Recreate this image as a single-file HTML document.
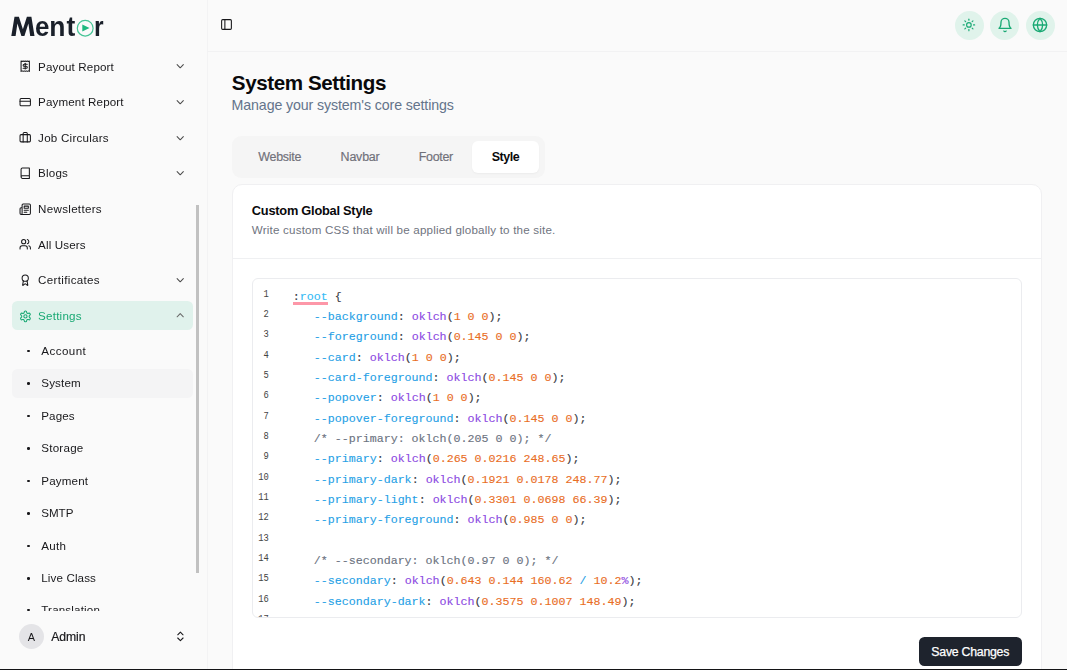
<!DOCTYPE html>
<html lang="en">
<head>
<meta charset="utf-8">
<title>System Settings</title>
<style>
*{box-sizing:border-box;margin:0;padding:0}
html,body{width:1067px;height:670px;overflow:hidden}
body{font-family:"Liberation Sans",sans-serif;background:#fafafa;color:#18181b;position:relative}
svg{display:block}
.abs{position:absolute}
#sidebar{will-change:transform;position:absolute;left:0;top:0;width:207.5px;height:669px;background:#fafafa;border-right:1px solid #f3f3f4}
#logo{position:absolute;left:0;top:0}
.item{position:absolute;left:12.1px;width:181.3px;height:29.2px;border-radius:5.5px;font-size:11.6px;color:#18181b}
.item .ic{position:absolute;left:7.1px;top:8.3px;width:12.44px;height:12.44px}
.item .tx{position:absolute;left:26px;top:-0.3px;line-height:29.2px;white-space:nowrap}
.item .ch{position:absolute;left:162.1px;top:8.3px;width:12.44px;height:12.44px;color:#4a4a4a}
.item.act .ch{color:#6a6a6a}
.item.act{background:#e0f2ec;color:#19a974}
.sub{position:absolute;left:12.1px;width:181.3px;height:28.9px;border-radius:5.5px;font-size:11.6px;color:#18181b}
.sub .dot{position:absolute;left:14.9px;top:13.2px;width:2.6px;height:2.6px;border-radius:50%;background:#18181b}
.sub .tx{position:absolute;left:29.2px;top:0.3px;line-height:28.9px;white-space:nowrap}
.sub.sel{background:#f4f4f5}
#menu{position:absolute;left:0;top:51px;width:207px;height:560.2px;overflow:hidden}
#sbar{position:absolute;left:195.8px;top:205.4px;width:3.3px;height:367.3px;background:#c1c1c1}
#avatar{position:absolute;left:18.9px;top:624px;width:25px;height:25px;border-radius:50%;background:#e4e4e7;font-size:10.9px;line-height:27.4px;text-align:center;color:#18181b}
#uname{position:absolute;left:51.2px;top:627.5px;-webkit-text-stroke:0.2px #18181b;font-size:12.2px;line-height:18px;color:#18181b;white-space:nowrap}
#updown{position:absolute;left:173.7px;top:630.1px;width:12.8px;height:12.8px;color:#18181b}
#header{position:absolute;left:207px;top:0;width:860px;height:51.8px;border-bottom:1px solid #f2f2f3}
.cbtn{position:absolute;top:10.8px;width:29.2px;height:29.2px;border-radius:50%;background:#e0f3eb;color:#19a974}
.cbtn svg{position:absolute}
h1{position:absolute;left:231.8px;top:71px;font-size:20.6px;line-height:24px;font-weight:bold;color:#09090b;white-space:nowrap}
#subt{position:absolute;left:231.6px;top:96.3px;font-size:14.2px;line-height:18px;color:#64748b;white-space:nowrap}
#tabs{position:absolute;left:232.2px;top:135.7px;width:312.4px;height:42px;border-radius:9px;background:#f5f5f5}
.tab{position:absolute;top:5.3px;height:32px;line-height:32px;font-size:12.44px;color:#71717a;-webkit-text-stroke:0.18px #71717a;text-align:center;border-radius:6px;white-space:nowrap}
.tab.on{background:#fff;color:#09090b;font-weight:bold;-webkit-text-stroke:0;box-shadow:0 1px 2px rgba(0,0,0,0.04)}
#card{position:absolute;left:232.2px;top:184px;width:810px;height:500px;background:#fff;border:1px solid #f0f0f2;border-radius:10px}
#ctitle{position:absolute;left:251.8px;top:203.1px;font-size:12.8px;line-height:16px;font-weight:bold;color:#09090b;white-space:nowrap}
#cdesc{position:absolute;left:251.8px;top:223.4px;font-size:11.6px;line-height:14px;color:#6f7480;white-space:nowrap}
#cdiv{position:absolute;left:233px;top:257.9px;width:808px;height:1px;background:#eff0f2}
#editor{position:absolute;left:252px;top:278px;width:770px;height:340px;border:1px solid #ebecef;border-radius:6px;background:#fff;overflow:hidden}
.ln{position:absolute;left:0;width:15.9px;text-align:right;font-family:"Liberation Mono",monospace;font-size:11px;transform:scaleX(0.8);transform-origin:100% 50%;line-height:20.33px;color:#444;height:20.33px}
.cl{position:absolute;left:39.7px;font-family:"Liberation Mono",monospace;font-size:11.67px;line-height:20.33px;height:20.33px;white-space:pre;color:#383a42;-webkit-text-stroke:0.12px currentColor}
.p{color:#1f9fe6}.r{color:#36bbf5}.f{color:#8b48e2}.n{color:#e96d24}.c{color:#6b7280}
#sq{position:absolute;left:39.6px;top:23px;width:35.3px;height:2.7px;background:#fd97a8}
#save{position:absolute;left:918.6px;top:636.6px;width:103.3px;height:29.2px;border-radius:5.5px;background:#1e232d;color:#fff;font-size:12.3px;line-height:30.6px;-webkit-text-stroke:0.25px #fff;text-align:center;white-space:nowrap}
#bottom{position:absolute;left:0;top:669px;width:1067px;height:1px;background:#141416}
</style>
</head>
<body>
<div id="sidebar">
<svg id="logo" width="120" height="50" viewBox="0 0 120 50">
<path d="M11.3 36.1 L14.5 16.8 L18.9 16.8 L22.9 29.3 L26.9 16.8 L31.4 16.8 L34.5 36.1 L30.2 36.1 L28.4 23.6 L24.4 36.1 L21.4 36.1 L17.4 23.6 L15.6 36.1 Z" fill="#1a202a"/>
<g font-family="Liberation Sans, sans-serif" font-weight="bold" font-size="27" fill="#1a202a">
<text x="34.9" y="36.1" textLength="14.4" lengthAdjust="spacingAndGlyphs">e</text>
<text x="49.2" y="36.1" textLength="16.2" lengthAdjust="spacingAndGlyphs">n</text>
<text x="66.5" y="36.1" textLength="8.8" lengthAdjust="spacingAndGlyphs">t</text>
<text x="94" y="36.1" textLength="9.6" lengthAdjust="spacingAndGlyphs">r</text>
</g>
<circle cx="85.2" cy="28.2" r="7.9" fill="none" stroke="#45c496" stroke-width="1.2"/>
<path d="M82.3 24.6 L89.5 28.1 L82.3 31.6 Z" fill="#1db87e"/>
</svg>

<div id="menu">
<div class="item" style="top:1.10px"><svg class="ic"  viewBox="0 0 24 24" fill="none" stroke="currentColor" stroke-width="2" stroke-linecap="round" stroke-linejoin="round"><path d="M4 2v20l2-1 2 1 2-1 2 1 2-1 2 1 2-1 2 1V2l-2 1-2-1-2 1-2-1-2 1-2-1-2 1Z"/><path d="M16 8h-6a2 2 0 1 0 0 4h4a2 2 0 1 1 0 4H8"/><path d="M12 17.5v-11"/></svg><span class="tx"><span id="x_i0" style="letter-spacing:0.129px">Payout Report</span></span><svg class="ch"  viewBox="0 0 24 24" fill="none" stroke="currentColor" stroke-width="2" stroke-linecap="round" stroke-linejoin="round"><path d="m6 9 6 6 6-6"/></svg></div>
<div class="item" style="top:36.66px"><svg class="ic"  viewBox="0 0 24 24" fill="none" stroke="currentColor" stroke-width="2" stroke-linecap="round" stroke-linejoin="round"><rect width="20" height="14" x="2" y="5" rx="2"/><line x1="2" x2="22" y1="10" y2="10"/></svg><span class="tx"><span id="x_i1" style="letter-spacing:0.130px">Payment Report</span></span><svg class="ch"  viewBox="0 0 24 24" fill="none" stroke="currentColor" stroke-width="2" stroke-linecap="round" stroke-linejoin="round"><path d="m6 9 6 6 6-6"/></svg></div>
<div class="item" style="top:72.22px"><svg class="ic" style="margin-top:-0.5px" viewBox="0 0 24 24" fill="none" stroke="currentColor" stroke-width="2" stroke-linecap="round" stroke-linejoin="round"><rect width="20" height="14" x="2" y="7" rx="2" ry="2"/><path d="M16 21V5a2 2 0 0 0-2-2h-4a2 2 0 0 0-2 2v16"/></svg><span class="tx"><span id="x_i2" style="letter-spacing:0.242px">Job Circulars</span></span><svg class="ch"  viewBox="0 0 24 24" fill="none" stroke="currentColor" stroke-width="2" stroke-linecap="round" stroke-linejoin="round"><path d="m6 9 6 6 6-6"/></svg></div>
<div class="item" style="top:107.78px"><svg class="ic"  viewBox="0 0 24 24" fill="none" stroke="currentColor" stroke-width="2" stroke-linecap="round" stroke-linejoin="round"><path d="M4 19.5v-15A2.5 2.5 0 0 1 6.5 2H20v20H6.5a2.5 2.5 0 0 1 0-5H20"/></svg><span class="tx"><span id="x_i3" style="letter-spacing:0.197px">Blogs</span></span><svg class="ch"  viewBox="0 0 24 24" fill="none" stroke="currentColor" stroke-width="2" stroke-linecap="round" stroke-linejoin="round"><path d="m6 9 6 6 6-6"/></svg></div>
<div class="item" style="top:143.34px"><svg class="ic"  viewBox="0 0 24 24" fill="none" stroke="currentColor" stroke-width="2" stroke-linecap="round" stroke-linejoin="round"><path d="M4 22h16a2 2 0 0 0 2-2V4a2 2 0 0 0-2-2H8a2 2 0 0 0-2 2v16a2 2 0 0 1-2 2Zm0 0a2 2 0 0 1-2-2v-9c0-1.1.9-2 2-2h2"/><path d="M18 14h-8"/><path d="M15 18h-5"/><path d="M10 6h8v4h-8V6Z"/></svg><span class="tx"><span id="x_i4" style="letter-spacing:0.294px">Newsletters</span></span></div>
<div class="item" style="top:178.90px"><svg class="ic"  viewBox="0 0 24 24" fill="none" stroke="currentColor" stroke-width="2" stroke-linecap="round" stroke-linejoin="round"><path d="M16 21v-2a4 4 0 0 0-4-4H6a4 4 0 0 0-4 4v2"/><circle cx="9" cy="7" r="4"/><path d="M22 21v-2a4 4 0 0 0-3-3.87"/><path d="M16 3.13a4 4 0 0 1 0 7.75"/></svg><span class="tx"><span id="x_i5" style="letter-spacing:0.134px">All Users</span></span></div>
<div class="item" style="top:214.46px"><svg class="ic"  viewBox="0 0 24 24" fill="none" stroke="currentColor" stroke-width="2" stroke-linecap="round" stroke-linejoin="round"><path d="m15.477 12.89 1.515 8.526a.5.5 0 0 1-.81.47l-3.58-2.687a1 1 0 0 0-1.197 0l-3.586 2.686a.5.5 0 0 1-.81-.469l1.514-8.526"/><circle cx="12" cy="8" r="6"/></svg><span class="tx"><span id="x_i6" style="letter-spacing:0.325px">Certificates</span></span><svg class="ch"  viewBox="0 0 24 24" fill="none" stroke="currentColor" stroke-width="2" stroke-linecap="round" stroke-linejoin="round"><path d="m6 9 6 6 6-6"/></svg></div>
<div class="item act" style="top:250.02px"><svg class="ic" style="margin-top:0.5px;margin-left:-0.2px;width:12.9px;height:12.9px" viewBox="0 0 24 24" fill="none" stroke="currentColor" stroke-width="2" stroke-linecap="round" stroke-linejoin="round"><path d="M12.22 2h-.44a2 2 0 0 0-2 2v.18a2 2 0 0 1-1 1.73l-.43.25a2 2 0 0 1-2 0l-.15-.08a2 2 0 0 0-2.73.73l-.22.38a2 2 0 0 0 .73 2.73l.15.1a2 2 0 0 1 1 1.72v.51a2 2 0 0 1-1 1.74l-.15.09a2 2 0 0 0-.73 2.73l.22.38a2 2 0 0 0 2.73.73l.15-.08a2 2 0 0 1 2 0l.43.25a2 2 0 0 1 1 1.73V20a2 2 0 0 0 2 2h.44a2 2 0 0 0 2-2v-.18a2 2 0 0 1 1-1.73l.43-.25a2 2 0 0 1 2 0l.15.08a2 2 0 0 0 2.73-.73l.22-.39a2 2 0 0 0-.73-2.73l-.15-.08a2 2 0 0 1-1-1.74v-.5a2 2 0 0 1 1-1.74l.15-.09a2 2 0 0 0 .73-2.73l-.22-.38a2 2 0 0 0-2.73-.73l-.15.08a2 2 0 0 1-2 0l-.43-.25a2 2 0 0 1-1-1.73V4a2 2 0 0 0-2-2z"/><circle cx="12" cy="12" r="3"/></svg><span class="tx"><span id="x_i7" style="letter-spacing:0.224px">Settings</span></span><svg class="ch"  viewBox="0 0 24 24" fill="none" stroke="currentColor" stroke-width="2" stroke-linecap="round" stroke-linejoin="round"><path d="m18 15-6-6-6 6"/></svg></div>
<div class="sub" style="top:285.60px"><i class="dot"></i><span class="tx"><span id="x_s0" style="letter-spacing:0.428px">Account</span></span></div>
<div class="sub sel" style="top:318.10px"><i class="dot"></i><span class="tx"><span id="x_s1" style="letter-spacing:0.141px">System</span></span></div>
<div class="sub" style="top:350.60px"><i class="dot"></i><span class="tx"><span id="x_s2" style="letter-spacing:0.085px">Pages</span></span></div>
<div class="sub" style="top:383.10px"><i class="dot"></i><span class="tx"><span id="x_s3" style="letter-spacing:0.227px">Storage</span></span></div>
<div class="sub" style="top:415.60px"><i class="dot"></i><span class="tx"><span id="x_s4" style="letter-spacing:0.176px">Payment</span></span></div>
<div class="sub" style="top:448.10px"><i class="dot"></i><span class="tx"><span id="x_s5" style="letter-spacing:-0.030px">SMTP</span></span></div>
<div class="sub" style="top:480.60px"><i class="dot"></i><span class="tx"><span id="x_s6" style="letter-spacing:0.260px">Auth</span></span></div>
<div class="sub" style="top:513.10px"><i class="dot"></i><span class="tx"><span id="x_s7" style="letter-spacing:0.122px">Live Class</span></span></div>
<div class="sub" style="top:544.70px"><i class="dot"></i><span class="tx"><span id="x_s8" style="letter-spacing:0.171px">Translation</span></span></div>
</div>
<div id="sbar"></div>
<div id="avatar">A</div>
<div id="uname"><span id="x_un" style="letter-spacing:-0.069px">Admin</span></div>
<svg id="updown"  viewBox="0 0 24 24" fill="none" stroke="currentColor" stroke-width="2" stroke-linecap="round" stroke-linejoin="round"><path d="m7 15 5 5 5-5"/><path d="m7 9 5-5 5 5"/></svg>
</div>
<div id="header">
<svg class="abs" style="left:13px;top:18.2px;width:13px;height:13px;color:#18181b" viewBox="0 0 24 24" fill="none" stroke="currentColor" stroke-width="2" stroke-linecap="round" stroke-linejoin="round"><rect width="18" height="18" x="3" y="3" rx="2"/><path d="M9 3v18"/></svg>
<div class="cbtn" style="left:747.50px"><svg style="left:7.70px;top:7.50px;width:13.80px;height:13.80px" viewBox="0 0 24 24" fill="none" stroke="currentColor" stroke-width="2" stroke-linecap="round" stroke-linejoin="round"><circle cx="12" cy="12" r="4"/><path d="M12 2v2"/><path d="M12 20v2"/><path d="m4.93 4.93 1.41 1.41"/><path d="m17.66 17.66 1.41 1.41"/><path d="M2 12h2"/><path d="M20 12h2"/><path d="m6.34 17.66-1.41 1.41"/><path d="m19.07 4.93-1.41 1.41"/></svg></div>
<div class="cbtn" style="left:783.20px"><svg style="left:6.60px;top:6.40px;width:16.00px;height:16.00px" viewBox="0 0 24 24" fill="none" stroke="currentColor" stroke-width="2" stroke-linecap="round" stroke-linejoin="round"><path d="M6 8a6 6 0 0 1 12 0c0 7 3 9 3 9H3s3-2 3-9"/><path d="M10.3 21a1.94 1.94 0 0 0 3.4 0"/></svg></div>
<div class="cbtn" style="left:818.80px"><svg style="left:6.60px;top:6.40px;width:16.00px;height:16.00px" viewBox="0 0 24 24" fill="none" stroke="currentColor" stroke-width="2" stroke-linecap="round" stroke-linejoin="round"><circle cx="12" cy="12" r="10"/><path d="M12 2a14.5 14.5 0 0 0 0 20 14.5 14.5 0 0 0 0-20"/><path d="M2 12h20"/></svg></div>
</div>
<h1><span id="x_h1" style="letter-spacing:-0.402px">System Settings</span></h1>
<div id="subt"><span id="x_subt" style="letter-spacing:-0.108px">Manage your system's core settings</span></div>
<div id="tabs">
<div class="tab" style="left:6.5px;width:82.0px"><span id="x_t0" style="letter-spacing:-0.288px">Website</span></div>
<div class="tab" style="left:88.7px;width:78.4px"><span id="x_t1" style="letter-spacing:-0.185px">Navbar</span></div>
<div class="tab" style="left:167.1px;width:73.0px"><span id="x_t2" style="letter-spacing:-0.309px">Footer</span></div>
<div class="tab on" style="left:240.0px;width:66.7px"><span id="x_t3" style="letter-spacing:-0.427px">Style</span></div>
</div>
<div id="card"></div>
<div id="ctitle"><span id="x_ct" style="letter-spacing:-0.235px">Custom Global Style</span></div>
<div id="cdesc"><span id="x_cd" style="letter-spacing:0.192px">Write custom CSS that will be applied globally to the site.</span></div>
<div id="cdiv"></div>
<div id="editor">
<div class="ln" style="top:4.70px">1</div><div class="cl" style="top:7.60px">:<span class="r">root</span> {</div>
<div class="ln" style="top:25.03px">2</div><div class="cl" style="top:27.93px">   <span class="p">--background</span>: <span class="f">oklch</span>(<span class="n">1 0 0</span>);</div>
<div class="ln" style="top:45.36px">3</div><div class="cl" style="top:48.26px">   <span class="p">--foreground</span>: <span class="f">oklch</span>(<span class="n">0.145 0 0</span>);</div>
<div class="ln" style="top:65.69px">4</div><div class="cl" style="top:68.59px">   <span class="p">--card</span>: <span class="f">oklch</span>(<span class="n">1 0 0</span>);</div>
<div class="ln" style="top:86.02px">5</div><div class="cl" style="top:88.92px">   <span class="p">--card-foreground</span>: <span class="f">oklch</span>(<span class="n">0.145 0 0</span>);</div>
<div class="ln" style="top:106.35px">6</div><div class="cl" style="top:109.25px">   <span class="p">--popover</span>: <span class="f">oklch</span>(<span class="n">1 0 0</span>);</div>
<div class="ln" style="top:126.68px">7</div><div class="cl" style="top:129.58px">   <span class="p">--popover-foreground</span>: <span class="f">oklch</span>(<span class="n">0.145 0 0</span>);</div>
<div class="ln" style="top:147.01px">8</div><div class="cl" style="top:149.91px">   <span class="c">/* --primary: oklch(0.205 0 0); */</span></div>
<div class="ln" style="top:167.34px">9</div><div class="cl" style="top:170.24px">   <span class="p">--primary</span>: <span class="f">oklch</span>(<span class="n">0.265 0.0216 248.65</span>);</div>
<div class="ln" style="top:187.67px">10</div><div class="cl" style="top:190.57px">   <span class="p">--primary-dark</span>: <span class="f">oklch</span>(<span class="n">0.1921 0.0178 248.77</span>);</div>
<div class="ln" style="top:208.00px">11</div><div class="cl" style="top:210.90px">   <span class="p">--primary-light</span>: <span class="f">oklch</span>(<span class="n">0.3301 0.0698 66.39</span>);</div>
<div class="ln" style="top:228.33px">12</div><div class="cl" style="top:231.23px">   <span class="p">--primary-foreground</span>: <span class="f">oklch</span>(<span class="n">0.985 0 0</span>);</div>
<div class="ln" style="top:248.66px">13</div><div class="cl" style="top:251.56px"></div>
<div class="ln" style="top:268.99px">14</div><div class="cl" style="top:271.89px">   <span class="c">/* --secondary: oklch(0.97 0 0); */</span></div>
<div class="ln" style="top:289.32px">15</div><div class="cl" style="top:292.22px">   <span class="p">--secondary</span>: <span class="f">oklch</span>(<span class="n">0.643 0.144 160.62 </span><span class="p">/</span><span class="n"> 10.2</span><span class="f">%</span>);</div>
<div class="ln" style="top:309.65px">16</div><div class="cl" style="top:312.55px">   <span class="p">--secondary-dark</span>: <span class="f">oklch</span>(<span class="n">0.3575 0.1007 148.49</span>);</div>
<div class="ln" style="top:329.98px">17</div><div class="cl" style="top:332.88px">   <span class="p">--secondary-light</span>: <span class="f">oklch</span>(<span class="n">0.9497 0.0482 162.08</span>);</div>
<div id="sq"></div>
</div>
<div id="save"><span id="x_sv" style="letter-spacing:-0.239px">Save Changes</span></div>
<div id="bottom"></div>
</body>
</html>
